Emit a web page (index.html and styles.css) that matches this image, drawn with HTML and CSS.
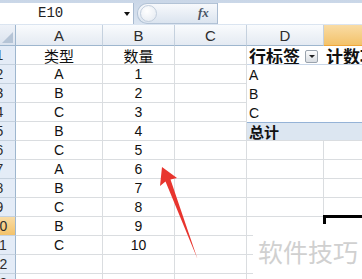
FILE: index.html
```html
<!DOCTYPE html>
<html lang="zh">
<head>
  <meta charset="UTF-8">
  <title>数据透视表</title>
  <link rel="stylesheet" href="styles.css">
</head>
<body>
  <div class="excel">
    <div class="fbar">
      <div class="namebox"><span class="ref">E10</span><span class="nb-arrow"></span></div>
      <div class="fx-area"><span class="knob"></span><i class="fx">fx</i></div>
      <div class="finput"></div>
    </div>

    <div class="sheet">
      <div class="corner"><span class="tri"></span></div>
      <div class="h">A</div>
      <div class="h">B</div>
      <div class="h">C</div>
      <div class="h">D</div>
      <div class="h h-sel"></div>

      <div class="rh">1</div>
      <div class="c zh">类型</div>
      <div class="c zh">数量</div>
      <div class="c"></div>
      <div class="c pv pv-head"><b>行标签</b><span class="dd"></span></div>
      <div class="c pv pv-head pv-e"><b>计数项:数量</b></div>

      <div class="rh">2</div>
      <div class="c">A</div>
      <div class="c">1</div>
      <div class="c"></div>
      <div class="c pv">A</div>
      <div class="c pv pv-e"></div>

      <div class="rh">3</div>
      <div class="c">B</div>
      <div class="c">2</div>
      <div class="c"></div>
      <div class="c pv">B</div>
      <div class="c pv pv-e"></div>

      <div class="rh">4</div>
      <div class="c">C</div>
      <div class="c">3</div>
      <div class="c"></div>
      <div class="c pv">C</div>
      <div class="c pv pv-e"></div>

      <div class="rh">5</div>
      <div class="c">B</div>
      <div class="c">4</div>
      <div class="c"></div>
      <div class="c pv pv-total"><b>总计</b></div>
      <div class="c pv pv-total pv-e"></div>

      <div class="rh">6</div>
      <div class="c">C</div>
      <div class="c">5</div>
      <div class="c"></div>
      <div class="c"></div>
      <div class="c"></div>

      <div class="rh">7</div>
      <div class="c">A</div>
      <div class="c">6</div>
      <div class="c"></div>
      <div class="c"></div>
      <div class="c"></div>

      <div class="rh">8</div>
      <div class="c">B</div>
      <div class="c">7</div>
      <div class="c"></div>
      <div class="c"></div>
      <div class="c"></div>

      <div class="rh">9</div>
      <div class="c">C</div>
      <div class="c">8</div>
      <div class="c"></div>
      <div class="c"></div>
      <div class="c"></div>

      <div class="rh rh-sel">10</div>
      <div class="c">B</div>
      <div class="c">9</div>
      <div class="c"></div>
      <div class="c"></div>
      <div class="c"></div>

      <div class="rh">11</div>
      <div class="c">C</div>
      <div class="c">10</div>
      <div class="c"></div>
      <div class="c"></div>
      <div class="c"></div>

      <div class="rh">12</div>
      <div class="c"></div>
      <div class="c"></div>
      <div class="c"></div>
      <div class="c"></div>
      <div class="c"></div>

      <div class="rh">13</div>
      <div class="c"></div>
      <div class="c"></div>
      <div class="c"></div>
      <div class="c"></div>
      <div class="c"></div>
    </div>

    <div class="sel-box"></div>

    <svg class="arrow" width="362" height="279" viewBox="0 0 362 279">
      <polygon points="162,167 177,178 170.5,179.5 197.5,259 165.5,181.5 160,186" fill="#e8352e"/>
    </svg>

    <div class="watermark">软件技巧</div>
  </div>
</body>
</html>
```

FILE: styles.css
```css
body {
  margin: 0;
  background: #fff;
  font-family: "Liberation Sans", "Noto Sans CJK SC", sans-serif;
  font-size: 14px;
  color: #111;
}
.excel {
  position: relative;
  width: 362px;
  height: 279px;
  overflow: hidden;
}

/* formula bar */
.fbar {
  display: flex;
  height: 25px;
  box-sizing: border-box;
  padding: 3px 0 1px;
  background: linear-gradient(#c9d6e7, #dbe5f1);
}
.namebox {
  position: relative;
  width: 134px;
  background: #fff;
  border-right: 1px solid #a9bbd1;
  box-sizing: border-box;
}
.ref {
  position: absolute;
  left: 38px;
  top: 2px;
  font-family: "Liberation Mono", monospace;
  font-size: 14px;
  color: #222;
}
.nb-arrow {
  position: absolute;
  left: 124px;
  top: 9px;
  border-left: 3px solid transparent;
  border-right: 3px solid transparent;
  border-top: 4px solid #111;
}
.fx-area {
  position: relative;
  width: 80px;
  margin-left: 3px;
  border: 1px solid #b3c3d6;
  border-right: none;
  border-radius: 10px 0 0 10px;
  background: linear-gradient(#f7f9fc, #dbe4ef);
  box-sizing: border-box;
}
.knob {
  position: absolute;
  left: 2px;
  top: 1px;
  width: 15px;
  height: 15px;
  border-radius: 50%;
  border: 1px solid #c2cedd;
  background: radial-gradient(circle at 40% 35%, #ffffff, #e2e8f0);
}
.fx {
  position: absolute;
  left: 60px;
  top: 1px;
  font-family: "Liberation Serif", serif;
  font-size: 13px;
  font-weight: bold;
  color: #4a5565;
}
.finput {
  flex: 1;
  background: #fff;
  border-left: 1px solid #a9bbd1;
}

/* grid */
.sheet {
  display: grid;
  grid-template-columns: 32px 87px 72px 72px 77px 60px;
  grid-template-rows: 21px;
  grid-auto-rows: 19px;
  margin-left: -16px;
}
.sheet > div {
  box-sizing: border-box;
  display: flex;
  align-items: center;
  justify-content: center;
  white-space: nowrap;
}
.corner {
  position: relative;
  background: linear-gradient(#eef2f8, #dbe3ee);
  border-right: 1px solid #9eb6ce;
  border-bottom: 1px solid #9eb6ce;
}
.tri {
  position: absolute;
  right: 2px;
  bottom: 2px;
  border-left: 11px solid transparent;
  border-bottom: 11px solid #b5c4d6;
}
.h {
  background: linear-gradient(#f9fbfd, #e4eaf2);
  border-right: 1px solid #c5d1de;
  border-bottom: 1px solid #9eb6ce;
  font-size: 15px;
  color: #2d2d2d;
}
.h-sel {
  background: linear-gradient(#f9dca5, #f3c26a);
  border-bottom-color: #f0a73a;
}
.rh {
  background: #e4ecf7;
  border-right: 1px solid #9eb6ce;
  border-bottom: 1px solid #c5d1de;
  color: #2d2d2d;
}
.rh-sel {
  background: linear-gradient(#f9dca5, #f3c26a);
}
.c {
  border-right: 1px solid #dadde0;
  border-bottom: 1px solid #dadde0;
}
.zh {
  font-size: 15px;
}

/* pivot table */
.sheet > .pv {
  justify-content: flex-start;
  padding-left: 2px;
  border-right: none;
  border-bottom: none;
  overflow: hidden;
}
.sheet > .pv-e {
  padding-left: 2px;
}
.pv b {
  font-weight: bold;
}
.sheet > .pv-head {
  font-size: 17px;
  border-bottom: 1px solid #c8d6e8;
}
.dd {
  flex: none;
  width: 13px;
  height: 13px;
  margin-left: 5px;
  margin-top: 3px;
  box-sizing: border-box;
  border: 1px solid #9aa3ad;
  border-radius: 2px;
  background: linear-gradient(#fdfdfd, #d9dde2);
  position: relative;
}
.dd::after {
  content: "";
  position: absolute;
  left: 3px;
  top: 4px;
  border-left: 3px solid transparent;
  border-right: 3px solid transparent;
  border-top: 3px solid #222;
}
.sheet > .pv-total {
  background: #dce6f1;
  border-top: 1px solid #95b3d7;
  border-bottom: 1px solid #dadde0;
  font-size: 15px;
}

/* overlays */
.sel-box {
  position: absolute;
  left: 323px;
  top: 215px;
  width: 60px;
  height: 23px;
  border: 3px solid #000;
}
.arrow {
  position: absolute;
  left: 0;
  top: 0;
  pointer-events: none;
}
.watermark {
  position: absolute;
  left: 253px;
  top: 224px;
  width: 109px;
  height: 55px;
  box-sizing: border-box;
  padding: 14px 0 0 5px;
  background: #fff;
  font-family: "Noto Sans CJK SC", sans-serif;
  font-size: 25px;
  line-height: 27px;
  color: #d0d0d0;
  white-space: nowrap;
}
```
